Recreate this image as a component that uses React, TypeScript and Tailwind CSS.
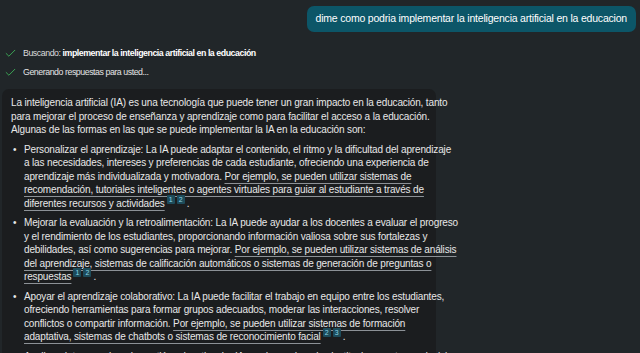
import { Check } from "lucide-react";

const font = { fontFamily: '"Liberation Sans", Arial, sans-serif' };

function Sup({ nums }: { nums: string[] }) {
  return (
    <span className="relative -top-[5px] ml-[2px] inline-flex gap-[2px] align-baseline">
      {nums.map((n) => (
        <span
          key={n}
          className="flex h-[9px] w-[8px] items-center justify-center rounded-[1px] bg-[#1d4b5a] text-[7px] leading-none tracking-normal text-[#8ad6e6]"
        >
          {n}
        </span>
      ))}
    </span>
  );
}

function Link({ children }: { children: React.ReactNode }) {
  return (
    <span className="underline decoration-[#8c9196] decoration-1 underline-offset-[3px]">{children}</span>
  );
}

export default function App() {
  return (
    <div
      className="h-[353px] w-[640px] overflow-hidden bg-[#212629] text-[#e8e8e8]"
      style={font}
    >
      {/* user message */}
      <div className="flex justify-end pr-[4px] pt-[6px]">
        <div className="flex h-[26px] items-center rounded-[7px] bg-[#0c5668] px-[9px] text-[10.5px] tracking-[-0.2px] text-white">
          dime como podria implementar la inteligencia artificial en la educacion
        </div>
      </div>

      {/* progress */}
      <div className="mt-[15px] flex flex-col gap-[6px] pl-[4px] text-[8.8px] tracking-[-0.45px]">
        <div className="flex h-[13px] items-center gap-[6px]">
          <Check size={13} strokeWidth={1.6} className="text-[#3fb65a]" />
          <span>
            <span className="text-[#dcdcdc]">Buscando: </span>
            <span className="font-bold text-white">implementar la inteligencia artificial en la educación</span>
          </span>
        </div>
        <div className="flex h-[13px] items-center gap-[6px]">
          <Check size={13} strokeWidth={1.6} className="text-[#3fb65a]" />
          <span className="text-[#e4e4e4]">Generando respuestas para usted...</span>
        </div>
      </div>

      {/* answer card */}
      <div className="ml-[2px] mt-[10px] w-[434px] rounded-[7px] bg-[#1b1d1f] px-[9px] pt-[7px] text-[10px] leading-[13.5px] tracking-[-0.15px] whitespace-nowrap">
        <p>
          La inteligencia artificial (IA) es una tecnología que puede tener un gran impacto en la educación, tanto
          <br />
          para mejorar el proceso de enseñanza y aprendizaje como para facilitar el acceso a la educación.
          <br />
          Algunas de las formas en las que se puede implementar la IA en la educación son:
        </p>
        <ul className="mt-[6px] flex flex-col gap-[6px]">
          <li className="flex">
            <span className="w-[13px] shrink-0 pl-[2px]">•</span>
            <span>
              Personalizar el aprendizaje: La IA puede adaptar el contenido, el ritmo y la dificultad del aprendizaje
              <br />
              a las necesidades, intereses y preferencias de cada estudiante, ofreciendo una experiencia de
              <br />
              aprendizaje más individualizada y motivadora. <Link>Por ejemplo, se pueden utilizar sistemas de</Link>
              <br />
              <Link>recomendación, tutoriales inteligentes o agentes virtuales para guiar al estudiante a través de</Link>
              <br />
              <Link>diferentes recursos y actividades</Link>
              <Sup nums={["1", "2"]} />
              <span className="ml-[2px]">.</span>
            </span>
          </li>
          <li className="flex">
            <span className="w-[13px] shrink-0 pl-[2px]">•</span>
            <span>
              Mejorar la evaluación y la retroalimentación: La IA puede ayudar a los docentes a evaluar el progreso
              <br />
              y el rendimiento de los estudiantes, proporcionando información valiosa sobre sus fortalezas y
              <br />
              debilidades, así como sugerencias para mejorar. <Link>Por ejemplo, se pueden utilizar sistemas de análisis</Link>
              <br />
              <Link>del aprendizaje, sistemas de calificación automáticos o sistemas de generación de preguntas o</Link>
              <br />
              <Link>respuestas</Link>
              <Sup nums={["1", "2"]} />
              <span className="ml-[2px]">.</span>
            </span>
          </li>
          <li className="flex">
            <span className="w-[13px] shrink-0 pl-[2px]">•</span>
            <span>
              Apoyar el aprendizaje colaborativo: La IA puede facilitar el trabajo en equipo entre los estudiantes,
              <br />
              ofreciendo herramientas para formar grupos adecuados, moderar las interacciones, resolver
              <br />
              conflictos o compartir información. <Link>Por ejemplo, se pueden utilizar sistemas de formación</Link>
              <br />
              <Link>adaptativa, sistemas de chatbots o sistemas de reconocimiento facial</Link>
              <Sup nums={["2", "3"]} />
              <span className="ml-[2px]">.</span>
            </span>
          </li>
          <li className="flex">
            <span className="w-[13px] shrink-0 pl-[2px]">•</span>
            <span>
              Analizar datos y mejorar la gestión educativa: La IA puede ayudar a las instituciones a tomar decisiones
            </span>
          </li>
        </ul>
      </div>
    </div>
  );
}
